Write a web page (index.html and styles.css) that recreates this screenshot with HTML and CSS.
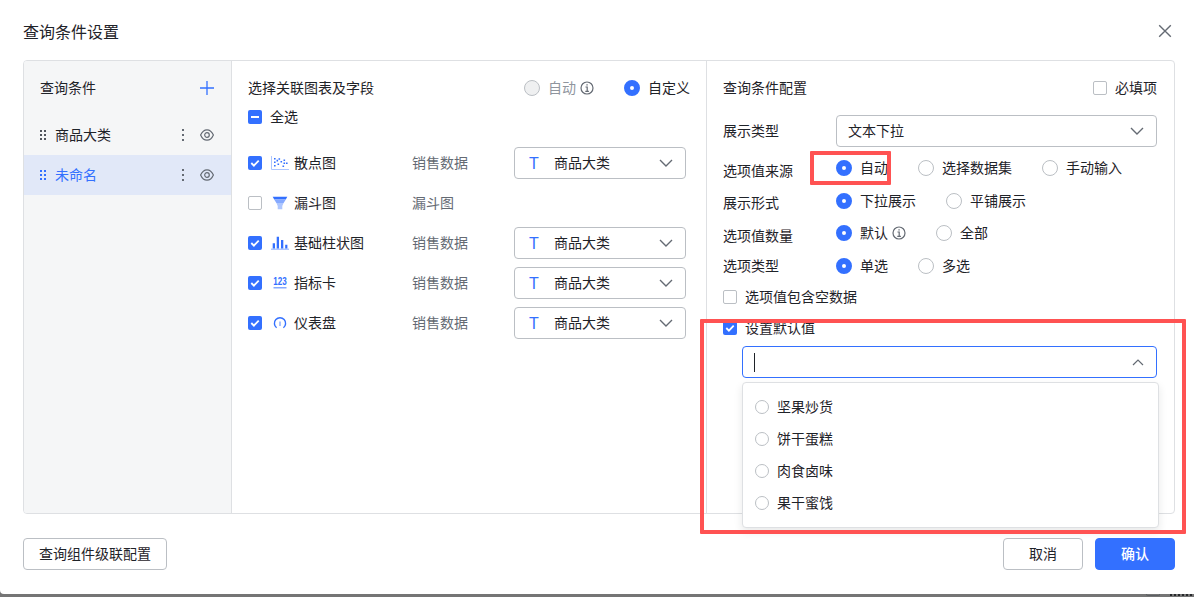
FILE: index.html
```
<!DOCTYPE html>
<html lang="zh-CN">
<head>
<meta charset="utf-8">
<title>查询条件设置</title>
<link rel="stylesheet" href="styles.css">
</head>
<body>

<svg class="defs" width="0" height="0">
  <symbol id="eye" viewBox="0 0 14 14">
    <path d="M.6 7C2 3.800 4.300 1.800 7 1.800S12 3.800 13.400 7C12 10.200 9.700 12.200 7 12.200S2 10.200 .6 7z"/>
    <circle cx="7" cy="7" r="2.300"/>
  </symbol>
  <symbol id="info" viewBox="0 0 14 14">
    <circle cx="7" cy="7" r="6"/>
    <path d="M5.500 6h1.700v4.200M5.300 10.300h3.600M6.400 3.800h1.300"/>
  </symbol>
  <symbol id="down" viewBox="0 0 14 8"><path d="M1 1l6 6 6-6"/></symbol>
  <symbol id="drag" viewBox="0 0 6 12">
    <path d="M0 1h2v2H0zM4 1h2v2H4zM0 5h2v2H0zM4 5h2v2H4zM0 9h2v2H0zM4 9h2v2H4z"/>
  </symbol>
  <symbol id="more" viewBox="0 0 2 12"><path d="M0 0h2v2H0zM0 5h2v2H0zM0 10h2v2H0z"/></symbol>
  <symbol id="tick" viewBox="0 0 14 14"><path d="M3.300 7l2.600 2.600 4.800-5"/></symbol>
</svg>

<div class="dialog">
  <div class="dialog-header">
    <span class="title">查询条件设置</span>
    <svg class="close" width="14" height="14" viewBox="0 0 14 14"><path d="M1.200 1.200l11.600 11.600M12.800 1.200L1.200 12.800"/></svg>
  </div>

  <div class="panel">
    <div class="sidebar">
      <div class="sidebar-header">
        <span>查询条件</span>
        <svg class="add" width="14" height="14" viewBox="0 0 14 14"><path d="M7 0v14M0 7h14"/></svg>
      </div>
      <div class="condition">
        <svg class="drag" width="6" height="12"><use href="#drag"/></svg>
        <span class="name">商品大类</span>
        <svg class="more" width="2" height="12"><use href="#more"/></svg>
        <svg class="line-icon" width="14" height="14"><use href="#eye"/></svg>
      </div>
      <div class="condition active">
        <svg class="drag" width="6" height="12"><use href="#drag"/></svg>
        <span class="name">未命名</span>
        <svg class="more" width="2" height="12"><use href="#more"/></svg>
        <svg class="line-icon" width="14" height="14"><use href="#eye"/></svg>
      </div>
    </div>

    <div class="charts">
      <div class="charts-header">
        <span>选择关联图表及字段</span>
        <div class="radios">
          <span class="radio disabled"><i></i>自动<svg class="line-icon info" width="14" height="14"><use href="#info"/></svg></span>
          <span class="radio checked"><i></i>自定义</span>
        </div>
      </div>
      <div class="check-all"><span class="checkbox half"></span>全选</div>

      <div class="chart-row">
        <span class="checkbox checked"><svg width="14" height="14"><use href="#tick"/></svg></span>
        <svg class="chart-icon" width="18" height="14" viewBox="0 0 18 14">
          <path d="M.5 0v13.500H18" fill="none" stroke="#adc6ff"/>
          <path d="M3 2h1.600v1.600H3zM3 5.500h1.600v1.600H3zM3 9h1.600v1.600H3zM5.500 3.800h1.600v1.600H5.500zM7.500 2.200h1.600v1.600H7.500zM6.500 7.500h1.600v1.600H6.500zM9.500 5h1.600v1.600H9.500zM11.500 9.500h1.600v1.600h-1.600zM12.500 3.500h1.600v1.600h-1.600zM12.500 6.500h1.600v1.600h-1.600zM15 6.500h1.600v1.600H15z" fill="#3370ff"/>
        </svg>
        <span class="name">散点图</span>
        <span class="source">销售数据</span>
        <div class="select"><b class="type">T</b><span>商品大类</span><svg class="line-icon arrow" width="14" height="8"><use href="#down"/></svg></div>
      </div>
      <div class="chart-row">
        <span class="checkbox"></span>
        <svg class="chart-icon" width="18" height="14" viewBox="0 0 18 14">
          <path d="M1.700 .8h14.600l-1.500 2.700H3.200z" fill="#3370ff"/>
          <path d="M3.200 3.500h11.600L12.600 7H5.400z" fill="#85a9ff"/>
          <path d="M5.400 7h7.200l-1.300 3v3.300H6.700V10z" fill="#adc6ff"/>
        </svg>
        <span class="name">漏斗图</span>
        <span class="source">漏斗图</span>
      </div>
      <div class="chart-row">
        <span class="checkbox checked"><svg width="14" height="14"><use href="#tick"/></svg></span>
        <svg class="chart-icon" width="18" height="14" viewBox="0 0 18 14">
          <path d="M0 12.500h18V14H0z" fill="#adc6ff"/>
          <path d="M1.700 7.300h2.300v5.200H1.700zM5.700 .8H8v11.700H5.700zM10 4h2.300v8.500H10zM14.200 8.700h2.200v3.800h-2.200z" fill="#3370ff"/>
        </svg>
        <span class="name">基础柱状图</span>
        <span class="source">销售数据</span>
        <div class="select"><b class="type">T</b><span>商品大类</span><svg class="line-icon arrow" width="14" height="8"><use href="#down"/></svg></div>
      </div>
      <div class="chart-row">
        <span class="checkbox checked"><svg width="14" height="14"><use href="#tick"/></svg></span>
        <svg class="chart-icon" width="18" height="14" viewBox="0 0 18 14">
          <text x="9" y="9.300" text-anchor="middle" textLength="13.500" lengthAdjust="spacingAndGlyphs">123</text>
          <path d="M2.500 11h13v1.500h-13z" fill="#85a9ff"/>
        </svg>
        <span class="name">指标卡</span>
        <span class="source">销售数据</span>
        <div class="select"><b class="type">T</b><span>商品大类</span><svg class="line-icon arrow" width="14" height="8"><use href="#down"/></svg></div>
      </div>
      <div class="chart-row">
        <span class="checkbox checked"><svg width="14" height="14"><use href="#tick"/></svg></span>
        <svg class="chart-icon" width="18" height="14" viewBox="0 0 18 14">
          <path d="M5.600 11.800a5.600 5.600 0 1 1 6.800 0" fill="none" stroke="#3370ff" stroke-width="1.400"/>
          <path d="M8.300 5.500h1.400v4.500H8.300z" fill="#85a9ff"/>
        </svg>
        <span class="name">仪表盘</span>
        <span class="source">销售数据</span>
        <div class="select"><b class="type">T</b><span>商品大类</span><svg class="line-icon arrow" width="14" height="8"><use href="#down"/></svg></div>
      </div>
    </div>

    <div class="config">
      <div class="config-header">
        <span>查询条件配置</span>
        <span class="check"><span class="checkbox"></span>必填项</span>
      </div>
      <div class="field type-field">
        <label>展示类型</label>
        <div class="select wide"><span>文本下拉</span><svg class="line-icon arrow" width="14" height="8"><use href="#down"/></svg></div>
      </div>
      <div class="field source-field">
        <label class="low">选项值来源</label>
        <div class="radios">
          <span class="radio checked"><i></i>自动</span>
          <span class="radio"><i></i>选择数据集</span>
          <span class="radio"><i></i>手动输入</span>
        </div>
        <div class="mark mark-source"></div>
      </div>
      <div class="field">
        <label>展示形式</label>
        <div class="radios">
          <span class="radio checked"><i></i>下拉展示</span>
          <span class="radio"><i></i>平铺展示</span>
        </div>
      </div>
      <div class="field">
        <label class="low">选项值数量</label>
        <div class="radios">
          <span class="radio checked"><i></i>默认<svg class="line-icon info" width="14" height="14"><use href="#info"/></svg></span>
          <span class="radio"><i></i>全部</span>
        </div>
      </div>
      <div class="field kind-field">
        <label>选项类型</label>
        <div class="radios">
          <span class="radio checked"><i></i>单选</span>
          <span class="radio"><i></i>多选</span>
        </div>
      </div>
      <div class="check option"><span class="checkbox"></span>选项值包含空数据</div>
      <div class="check option"><span class="checkbox checked"><svg width="14" height="14"><use href="#tick"/></svg></span>设置默认值</div>
      <div class="default-value">
        <div class="input">
          <span class="caret"></span>
          <svg class="line-icon up" width="12" height="7" viewBox="0 0 12 7"><path d="M1 6l5-5 5 5"/></svg>
        </div>
        <div class="dropdown">
          <div class="radio small"><i></i>坚果炒货</div>
          <div class="radio small"><i></i>饼干蛋糕</div>
          <div class="radio small"><i></i>肉食卤味</div>
          <div class="radio small"><i></i>果干蜜饯</div>
        </div>
        <div class="mark mark-default"></div>
      </div>
    </div>
  </div>

  <div class="dialog-footer">
    <button class="btn cascade">查询组件级联配置</button>
    <button class="btn">取消</button>
    <button class="btn primary">确认</button>
  </div>
</div>

<!-- edge of the dimmed page below the dialog -->
<div class="backdrop"><span class="backdrop-box"></span><span class="backdrop-text"></span></div>

</body>
</html>
```

FILE: styles.css
```
* {
  box-sizing: border-box;
}

body {
  margin: 0;
  height: 597px;
  overflow: hidden;
  background: #757575;
  color: #1f2329;
  font: 14px/20px "Liberation Sans", "Noto Sans CJK SC", sans-serif;
}

svg {
  flex: none;
}

.defs {
  position: absolute;
}

.dialog {
  height: 594px;
  padding: 0 19px 0 23px;
  background: #fff;
  border-radius: 0 0 0 4px;
}

.dialog-header {
  display: flex;
  align-items: center;
  justify-content: space-between;
  height: 60px;
  padding: 3px 3px 0 0;
}

.title {
  padding-top: 2px;
  font-size: 16px;
  line-height: 24px;
}

.close {
  margin-bottom: 2px;
  fill: none;
  stroke: #646a73;
  stroke-width: 1.4;
}

.panel {
  display: flex;
  height: 454px;
  border: 1px solid #dee0e3;
  border-radius: 4px;
}

/* left column */
.sidebar {
  width: 208px;
  background: #f5f6f7;
  border-right: 1px solid #dee0e3;
  border-radius: 3px 0 0 3px;
}

.sidebar-header {
  display: flex;
  align-items: center;
  justify-content: space-between;
  height: 54px;
  padding: 0 17px 0 16px;
}

.add {
  fill: none;
  stroke: #3370ff;
  stroke-width: 1.3;
}

.condition {
  display: flex;
  align-items: center;
  height: 40px;
  padding: 0 17px 0 16px;
}

.condition .name {
  flex: 1;
  margin-left: 9px;
}

.condition.active {
  background: #e1e8f8;
}

.condition.active .name {
  color: #3370ff;
}

.drag {
  fill: #51565d;
}

.active .drag {
  fill: #3370ff;
}

.more {
  margin-right: 16px;
  fill: #646a73;
}

.line-icon {
  fill: none;
  stroke: #646a73;
  stroke-width: 1.2;
}

/* middle column */
.charts {
  width: 475px;
  padding: 17px 16px 0;
  border-right: 1px solid #dee0e3;
}

.charts-header,
.config-header {
  display: flex;
  justify-content: space-between;
}

.radios {
  display: flex;
  gap: 30px;
}

.radio,
.check,
.check-all {
  display: flex;
  align-items: center;
  gap: 8px;
}

.radio i {
  width: 16px;
  height: 16px;
  border: 1px solid #bbbfc4;
  border-radius: 50%;
  background: #fff;
}

.radio.checked i {
  border: 6px solid #3370ff;
}

.radio.disabled {
  color: #8f959e;
}

.radio.disabled i {
  background: #eff0f1;
}

.radio.small i {
  width: 14px;
  height: 14px;
}

.info {
  margin-left: -4px;
}

.check-all {
  margin: 9px 0 16px;
}

.checkbox {
  flex: none;
  display: flex;
  align-items: center;
  justify-content: center;
  width: 14px;
  height: 14px;
  border: 1px solid #bbbfc4;
  border-radius: 2px;
  background: #fff;
}

.checkbox.checked,
.checkbox.half {
  border: 0;
  background: #3370ff;
}

.checkbox.checked svg {
  fill: none;
  stroke: #fff;
  stroke-width: 1.8;
}

.checkbox.half:after {
  content: "";
  width: 8px;
  height: 2px;
  background: #fff;
}

.chart-row {
  display: flex;
  align-items: center;
  height: 40px;
}

.chart-icon {
  margin: 0 5px 0 9px;
  overflow: visible;
}

.chart-icon text {
  fill: #3370ff;
  font: bold 10px "Liberation Sans", sans-serif;
}

.chart-row .name {
  width: 118px;
}

.source {
  width: 102px;
  color: #646a73;
}

.select {
  display: flex;
  align-items: center;
  width: 172px;
  height: 32px;
  padding: 0 12px 0 14px;
  border: 1px solid #bbbfc4;
  border-radius: 4px;
}

.select .type {
  width: 25px;
  padding-top: 2px;
  color: #3370ff;
  font: 16px "Liberation Sans", sans-serif;
}

.arrow {
  margin-left: auto;
  stroke-width: 1.4;
}

/* right column */
.config {
  flex: 1;
  padding: 17px 17px 0 16px;
}

.field {
  position: relative;
  display: flex;
  align-items: center;
  height: 32px;
}

.field label {
  width: 113px;
  padding-top: 4px;
}

.field label.low {
  padding-top: 5px;
}

.type-field {
  margin: 17px 0 5px;
}

.source-field {
  margin-bottom: 1px;
}

.type-field label {
  padding-top: 0;
}

.select.wide {
  width: 321px;
  padding-left: 11px;
}

.kind-field {
  margin: 1px 0 5px;
}

.kind-field label {
  padding-top: 0;
}

.option {
  margin-bottom: 11px;
}

.default-value {
  position: relative;
  margin: -3px 0 0 19px;
}

.input {
  display: flex;
  align-items: center;
  justify-content: space-between;
  height: 32px;
  padding: 0 12px 0 11px;
  border: 1px solid #3370ff;
  border-radius: 4px;
}

.caret {
  width: 1px;
  height: 19px;
  background: #1f2329;
}

.dropdown {
  position: absolute;
  top: 36px;
  left: 0;
  width: 417px;
  height: 146px;
  padding: 14px 12px;
  border: 1px solid #dee0e3;
  border-radius: 4px;
  background: #fff;
  box-shadow: 0 4px 8px rgba(31, 35, 41, .1);
}

.dropdown .radio {
  height: 20px;
  margin-bottom: 12px;
}

/* red highlight frames */
.mark {
  position: absolute;
  border: 4px solid #ff5252;
  border-radius: 1px;
}

.mark-source {
  top: -1px;
  left: 87px;
  width: 81px;
  height: 34px;
}

.mark-default {
  top: -27px;
  left: -42px;
  width: 486px;
  height: 215px;
}

/* footer */
.dialog-footer {
  display: flex;
  gap: 12px;
  padding-top: 24px;
}

.btn {
  width: 80px;
  height: 32px;
  padding: 0;
  border: 1px solid #bbbfc4;
  border-radius: 4px;
  background: #fff;
  color: #1f2329;
  font: inherit;
}

.btn.cascade {
  width: 144px;
  margin-right: auto;
}

.btn.primary {
  border-color: #3370ff;
  background: #3370ff;
  color: #fff;
  font-weight: 500;
}

.backdrop {
  display: flex;
  justify-content: flex-end;
  gap: 10px;
  height: 3px;
  padding-right: 2px;
}

.backdrop-box {
  width: 14px;
  height: 2px;
  border: 1px solid #5c5f63;
  border-top: 0;
  border-radius: 0 0 2px 2px;
}

.backdrop-text {
  width: 22px;
  height: 2px;
  border-top: 2px dotted #26282b;
}
```
